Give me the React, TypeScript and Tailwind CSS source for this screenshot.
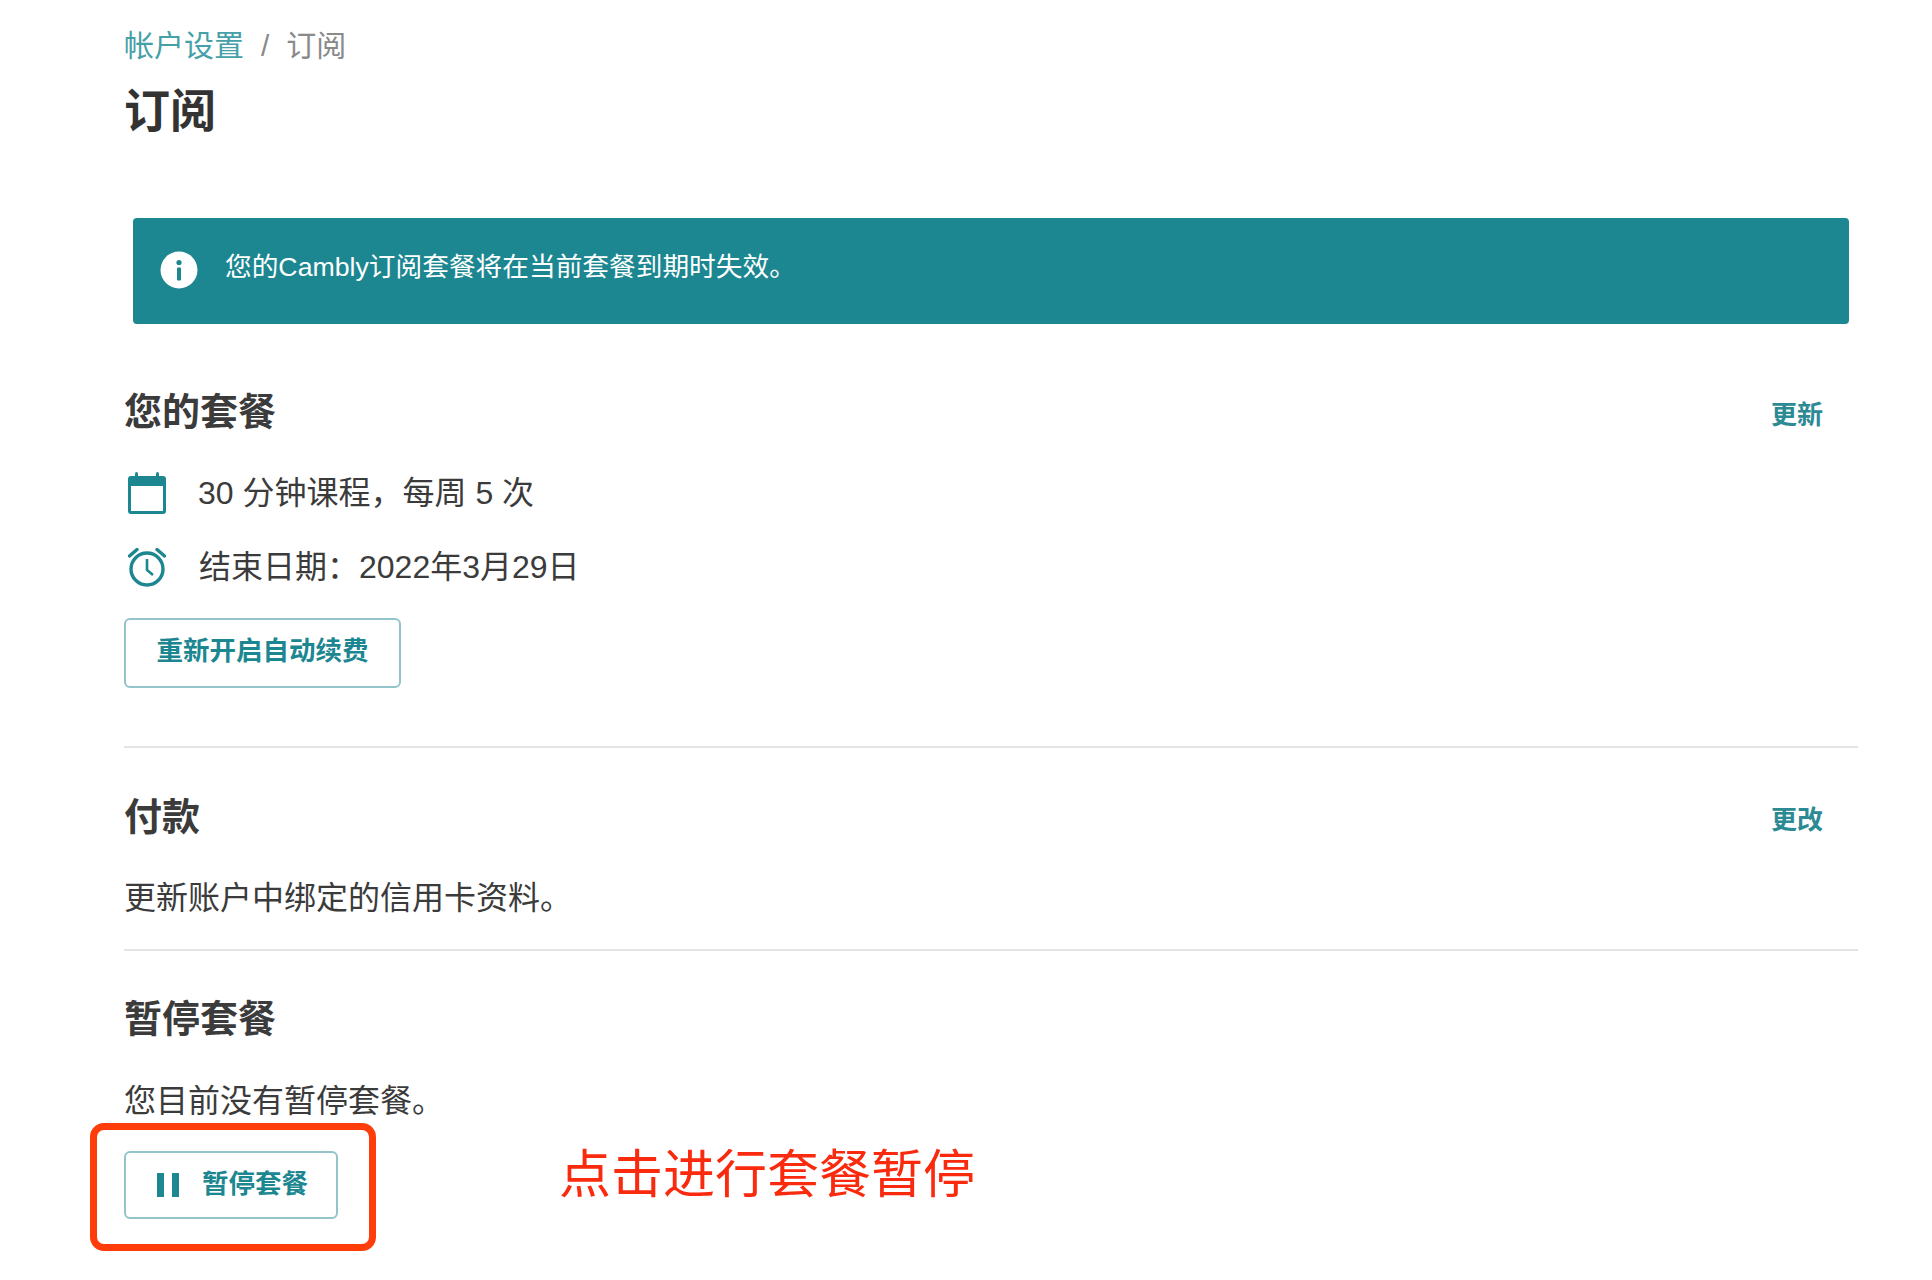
import React from 'react';

const fontStack = { fontFamily: '"Liberation Sans", "Noto Sans CJK SC", sans-serif' };

const InfoIcon = () => (
  <svg viewBox="0 0 38 38" className="mb-[2px] h-[38px] w-[38px] shrink-0">
    <circle cx="19" cy="19" r="18.5" fill="#fff" />
    <circle cx="19" cy="11.5" r="2.6" fill="#1c8791" />
    <rect x="17" y="16.5" width="4" height="13" rx="1" fill="#1c8791" />
  </svg>
);

const CalendarIcon = () => (
  <svg viewBox="0 0 38 42" className="h-[42px] w-[38px] shrink-0">
    <rect x="7" y="0" width="3" height="6" rx="1.5" fill="#1c8791" />
    <rect x="28" y="0" width="3" height="6" rx="1.5" fill="#1c8791" />
    <path d="M3 4h32a3 3 0 0 1 3 3v32a3 3 0 0 1-3 3H3a3 3 0 0 1-3-3V7a3 3 0 0 1 3-3z" fill="#1c8791" />
    <rect x="3" y="14" width="32" height="25" fill="#fff" />
  </svg>
);

const AlarmIcon = () => (
  <svg viewBox="0 0 38 42" fill="none" stroke="#1c8791" className="h-[42px] w-[38px] shrink-0">
    <circle cx="19" cy="23" r="16" strokeWidth="3.4" />
    <path d="M19 13v11l6 5" strokeWidth="2.6" />
    <path d="M1.5 10 9 3.5M36.5 10 29 3.5" strokeWidth="3.4" strokeLinecap="round" />
  </svg>
);

const SectionHeader = ({ title, action }: { title: string; action?: string }) => (
  <div className="flex items-start justify-between pr-[35px]">
    <h2 className="mt-[2px] text-[38px] leading-[48px] font-bold text-[#3b3b3b]">{title}</h2>
    {action && <a className="mt-[11px] text-[26px] leading-[36px] font-bold text-[#2b8a94]">{action}</a>}
  </div>
);

const Divider = ({ className }: { className: string }) => (
  <div className={`h-[2px] bg-[#e4e4e4] ${className}`} />
);

export default function App() {
  return (
    <main style={fontStack} className="h-[1280px] overflow-hidden bg-white pr-[74px] pl-[124px]">
      <nav className="flex gap-[17px] pt-[26px] text-[30px] leading-[40px] text-[#8a8a8a]">
        <a className="text-[#46a0a8]">帐户设置</a>
        <span>/</span>
        <span>订阅</span>
      </nav>
      <h1 className="mt-[15px] text-[46px] leading-[60px] font-bold text-[#333]">订阅</h1>

      <div className="mx-[9px] mt-[77px] flex h-[106px] items-center gap-[27px] rounded-[4px] bg-[#1c8791] pl-[27px] text-white">
        <InfoIcon />
        <span className="mb-[8px] text-[26.7px] leading-[36px]">您的Cambly订阅套餐将在当前套餐到期时失效。</span>
      </div>

      <section className="mt-[62px]">
        <SectionHeader title="您的套餐" action="更新" />
        <div className="mt-[37px] flex h-[40px] items-center gap-[32px] pl-[4px] text-[32px] text-[#3b3b3b]">
          <CalendarIcon />
          <span className="mb-[1px]">30 分钟课程，每周 5 次</span>
        </div>
        <div className="mt-[34px] flex h-[40px] items-center gap-[33px] pl-[4px] text-[32px] text-[#3b3b3b]">
          <AlarmIcon />
          <span className="mb-[1px]">结束日期：2022年3月29日</span>
        </div>
        <button className="mt-[31px] block h-[70px] w-[277px] rounded-[6px] border-2 border-[#93c4c9] pb-[2px] text-center text-[26.5px] font-bold text-[#1c8791]">
          重新开启自动续费
        </button>
      </section>

      <Divider className="mt-[58px]" />

      <section className="mt-[43px]">
        <SectionHeader title="付款" action="更改" />
        <p className="mt-[37px] text-[32px] leading-[40px] text-[#3b3b3b]">更新账户中绑定的信用卡资料。</p>
      </section>

      <Divider className="mt-[31px]" />

      <section className="mt-[42px]">
        <SectionHeader title="暂停套餐" />
        <p className="mt-[38px] text-[32px] leading-[40px] text-[#3b3b3b]">您目前没有暂停套餐。</p>
        <div className="mt-[30px] flex items-start">
          <div className="relative">
            <button className="flex h-[68px] w-[214px] items-center gap-[22px] rounded-[6px] border-2 border-[#93c4c9] pl-[31px] text-[26.5px] font-bold text-[#1c8791]">
              <svg viewBox="0 0 23 24" className="h-[24px] w-[23px] shrink-0" fill="#1c8791">
                <rect x="0" y="0" width="7" height="24" />
                <rect x="15" y="0" width="7" height="24" />
              </svg>
              暂停套餐
            </button>
            <div className="absolute -top-[28px] -right-[38px] -bottom-[32px] -left-[34px] rounded-[14px] border-[7px] border-[#ff3d0a]" />
          </div>
          <span className="-mt-[6px] ml-[221px] text-[52px] leading-[60px] text-[#fa2a0f]">点击进行套餐暂停</span>
        </div>
      </section>
    </main>
  );
}
